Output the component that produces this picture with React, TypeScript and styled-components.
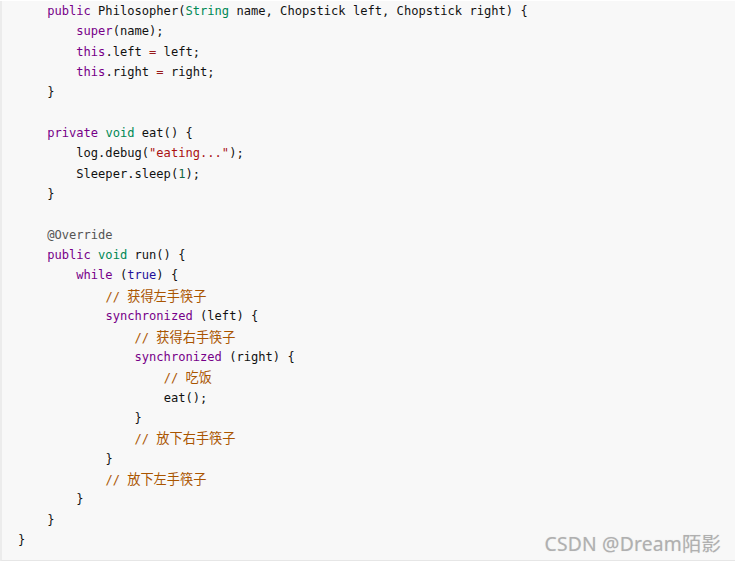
import React from "react";
import styled, { createGlobalStyle } from "styled-components";

const Global = createGlobalStyle`
  html, body { margin: 0; padding: 0; background: #ffffff; }
  body { width: 735px; height: 562px; overflow: hidden; }
`;

type Kind = "kw" | "type" | "str" | "num" | "cm" | "meta" | "atom" | "op" | "p";
type Token = [Kind, string];

const colors: Record<Kind, string> = {
  kw: "#770088",
  type: "#008855",
  str: "#aa1111",
  num: "#116644",
  cm: "#aa5500",
  meta: "#555555",
  atom: "#221199",
  op: "#981a1a",
  p: "#111111",
};

const Block = styled.div`
  position: relative;
  box-sizing: border-box;
  margin-top: 1px;
  width: 735px;
  height: 560px;
  background: #f8f8f8;
  border-left: 2px solid #ececec;
  border-bottom: 1px solid #e6e6e6;
  overflow: hidden;
`;

const Pre = styled.pre`
  margin: 0;
  padding: 0 0 0 16px;
  font-family: "DejaVu Sans Mono", "Liberation Mono", "Noto Sans CJK SC", monospace;
  font-size: 12.1px;
  line-height: 20.35px;
  color: #111111;
  white-space: pre;
`;

const Line = styled.div`
  height: 20.35px;
`;

const Tok = styled.span<{ $kind: Kind }>`
  color: ${(p) => colors[p.$kind]};
`;

const Cjk = styled.span`
  font-family: "Noto Sans CJK SC", sans-serif;
  font-size: 13.2px;
`;

const Watermark = styled.div`
  position: absolute;
  right: 14px;
  bottom: 3px;
  font-family: "Noto Sans", "Noto Sans CJK SC", sans-serif;
  font-size: 19.3px;
  color: #b0b0b0;
  letter-spacing: 0.2px;
  text-shadow: 0 0 1px rgba(120, 120, 120, 0.25);
`;

const sp = (n: number): Token => ["p", " ".repeat(n)];

const lines: Token[][] = [
  [sp(4), ["kw", "public"], ["p", " Philosopher("], ["type", "String"], ["p", " name, Chopstick left, Chopstick right) {"]],
  [sp(8), ["kw", "super"], ["p", "(name);"]],
  [sp(8), ["kw", "this"], ["p", ".left "], ["op", "="], ["p", " left;"]],
  [sp(8), ["kw", "this"], ["p", ".right "], ["op", "="], ["p", " right;"]],
  [sp(4), ["p", "}"]],
  [],
  [sp(4), ["kw", "private"], ["p", " "], ["type", "void"], ["p", " eat() {"]],
  [sp(8), ["p", "log.debug("], ["str", "\"eating...\""], ["p", ");"]],
  [sp(8), ["p", "Sleeper.sleep("], ["num", "1"], ["p", ");"]],
  [sp(4), ["p", "}"]],
  [],
  [sp(4), ["meta", "@Override"]],
  [sp(4), ["kw", "public"], ["p", " "], ["type", "void"], ["p", " run() {"]],
  [sp(8), ["kw", "while"], ["p", " ("], ["atom", "true"], ["p", ") {"]],
  [sp(12), ["cm", "// 获得左手筷子"]],
  [sp(12), ["kw", "synchronized"], ["p", " (left) {"]],
  [sp(16), ["cm", "// 获得右手筷子"]],
  [sp(16), ["kw", "synchronized"], ["p", " (right) {"]],
  [sp(20), ["cm", "// 吃饭"]],
  [sp(20), ["p", "eat();"]],
  [sp(16), ["p", "}"]],
  [sp(16), ["cm", "// 放下右手筷子"]],
  [sp(12), ["p", "}"]],
  [sp(12), ["cm", "// 放下左手筷子"]],
  [sp(8), ["p", "}"]],
  [sp(4), ["p", "}"]],
  [["p", "}"]],
];

function renderText(kind: Kind, text: string) {
  if (kind !== "cm") return text;
  const m = text.match(/^(\/\/ )(.*)$/);
  if (!m) return text;
  return (
    <>
      {m[1]}
      <Cjk>{m[2]}</Cjk>
    </>
  );
}

export default function App() {
  return (
    <>
      <Global />
      <Block>
        <Pre>
          {lines.map((toks, i) => (
            <Line key={i}>
              {toks.length === 0 ? " " : toks.map(([k, t], j) => (
                <Tok key={j} $kind={k}>
                  {renderText(k, t)}
                </Tok>
              ))}
            </Line>
          ))}
        </Pre>
        <Watermark>CSDN @Dream陌影</Watermark>
      </Block>
    </>
  );
}
